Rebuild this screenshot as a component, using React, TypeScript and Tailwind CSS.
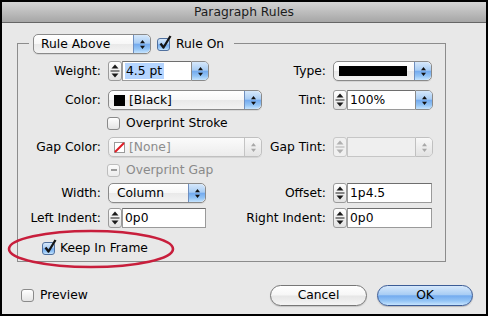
import React from "react";

const BLUE =
  "bg-[linear-gradient(to_bottom,#d6e8fb_0%,#a9cdf4_45%,#74abef_52%,#93c4f5_78%,#c6e4fe_100%)]";
const WHITEGRAD = "bg-[linear-gradient(to_bottom,#ffffff_0%,#f7f7f7_50%,#e9e9e9_52%,#f3f3f3_100%)]";

function UpDown({ color = "#111" }: { color?: string }) {
  return (
    <svg width="7" height="11" viewBox="0 0 7 11">
      <path d="M3.5 1 L6 4.2 L1 4.2 Z M1 6.8 L6 6.8 L3.5 10 Z" fill={color} />
    </svg>
  );
}

function Arrow({ disabled = false }: { disabled?: boolean }) {
  return (
    <div
      className={`w-[17px] h-full flex items-center justify-center rounded-r-[5px] border-l ${
        disabled
          ? "border-[#c4c4c4] bg-[linear-gradient(to_bottom,#f8f8f8,#e4e4e4)]"
          : `border-[#6f8fbf] ${BLUE}`
      }`}
    >
      <UpDown color={disabled ? "#a8a8a8" : "#111"} />
    </div>
  );
}

function Popup({
  w,
  children,
  disabled = false,
}: {
  w: string;
  children: React.ReactNode;
  disabled?: boolean;
}) {
  return (
    <div
      className={`${w} h-[20px] flex rounded-[5px] border ${
        disabled ? "border-[#c0c0c0] bg-[linear-gradient(to_bottom,#fbfbfb,#ececec)]" : `border-[#8a8a8a] ${WHITEGRAD}`
      } shadow-[0_1px_0_rgba(0,0,0,0.08)]`}
    >
      <div className={`flex-1 flex items-center min-w-0 ${disabled ? "text-[#8c8c8c]" : "text-black"}`}>
        {children}
      </div>
      <Arrow disabled={disabled} />
    </div>
  );
}

function Stepper({ disabled = false }: { disabled?: boolean }) {
  const c = disabled ? "#b0b0b0" : "#1a1a1a";
  return (
    <div
      className={`w-[14px] h-[20px] flex items-center justify-center rounded-[3px] border ${
        disabled ? "border-[#c8c8c8] bg-[#f0f0f0]" : "border-[#9a9a9a] bg-[linear-gradient(to_bottom,#ffffff,#e2e2e2)]"
      }`}
    >
      <svg width="12" height="18" viewBox="0 0 12 18">
        <path d="M6 2.5 L9.5 6.5 L2.5 6.5 Z M2.5 11.5 L9.5 11.5 L6 15.5 Z" fill={c} />
        <path d="M1.5 9 L10.5 9" stroke={c} strokeWidth="1" />
      </svg>
    </div>
  );
}

function Input({ w, children }: { w: string; children?: React.ReactNode }) {
  return (
    <div className={`${w} h-[20px] flex items-center pl-[2px] border bg-white border-[#9a9a9a] border-t-[#6e6e6e]`}>
      {children}
    </div>
  );
}

function Check({ checked = false, mixed = false, disabled = false }: { checked?: boolean; mixed?: boolean; disabled?: boolean }) {
  return (
    <div className="relative w-[13px] h-[13px] shrink-0">
      <div
        className={`w-[13px] h-[13px] rounded-[3px] border ${
          checked
            ? `border-[#50709e] ${BLUE}`
            : disabled
            ? "border-[#bdbdbd] bg-[linear-gradient(to_bottom,#fbfbfb,#ececec)]"
            : "border-[#8a8a8a] bg-[linear-gradient(to_bottom,#ffffff,#e4e4e4)]"
        } flex items-center justify-center`}
      >
        {mixed && <div className="w-[6px] h-[2px] bg-[#9a9a9a]" />}
      </div>
      {checked && (
        <svg className="absolute left-[1px] top-[-3px]" width="14" height="15" viewBox="0 0 14 15">
          <path d="M2.5 8.5 L5.5 12.5 L12.5 1" fill="none" stroke="#141414" strokeWidth="2.3" strokeLinejoin="round" />
        </svg>
      )}
    </div>
  );
}

function Row({
  label,
  left,
  rlabel,
  right,
  mt,
}: {
  label?: string;
  left?: React.ReactNode;
  rlabel?: string;
  right?: React.ReactNode;
  mt: string;
}) {
  return (
    <div className={`flex items-center h-[20px] ${mt}`}>
      <div className="w-[83px] shrink-0 flex justify-end whitespace-nowrap">{label}</div>
      <div className="w-[154px] shrink-0 ml-[7px] flex">{left}</div>
      <div className="w-[64px] shrink-0 flex justify-end whitespace-nowrap">{rlabel}</div>
      <div className="w-[99px] shrink-0 ml-[7px] flex">{right}</div>
    </div>
  );
}

export default function App() {
  return (
    <div className="relative w-[488px] h-[316px] bg-black p-[2px] font-['DejaVu_Sans',sans-serif] text-[12.3px] leading-none text-black">
      <div className="w-full h-full flex flex-col bg-[#e8e8e8]">
        {/* title bar */}
        <div className="h-[21px] shrink-0 flex items-center justify-center border-b border-[#666666] bg-[linear-gradient(to_bottom,#d4d4d4,#a6a6a6)] text-[#1c1c1c]">
          Paragraph Rules
        </div>
        {/* body */}
        <div className="flex-1 flex flex-col px-[15px] pt-[20px]">
          <div className="w-[429px] h-[219px] shrink-0 border border-[#8c8c8c] flex flex-col">
            {/* header legend */}
            <div className="-mt-[10px] ml-[11px] w-fit h-[20px] flex items-center px-[4px] pr-[10px] bg-[#e8e8e8]">
              <Popup w="w-[118px]">
                <span className="pl-[7px]">Rule Above</span>
              </Popup>
              <div className="ml-[6px]">
                <Check checked />
              </div>
              <span className="ml-[6px]">Rule On</span>
            </div>

            <Row
              mt="mt-[7px]"
              label="Weight:"
              left={
                <div className="flex">
                  <Stepper />
                  <div className="w-[69px] h-[20px] flex items-center pl-[2px] bg-white border border-[#9a9a9a] border-t-[#6e6e6e] border-r-0">
                    <span className="bg-[#b5d5ff] h-[16px] flex items-center pl-[1px] pr-[2px]">4.5 pt</span>
                  </div>
                  <div className="h-[20px] flex border border-[#8a8a8a] rounded-r-[5px]">
                    <div className={`w-[16px] h-full flex items-center justify-center rounded-r-[4px] ${BLUE}`}>
                      <UpDown />
                    </div>
                  </div>
                </div>
              }
              rlabel="Type:"
              right={
                <Popup w="w-[99px]">
                  <div className="ml-[5px] w-[68px] h-[10px] bg-black" />
                </Popup>
              }
            />

            <Row
              mt="mt-[9px]"
              label="Color:"
              left={
                <Popup w="w-[154px]">
                  <div className="ml-[5px] w-[11px] h-[11px] bg-black" />
                  <span className="ml-[4px]">[Black]</span>
                </Popup>
              }
              rlabel="Tint:"
              right={
                <div className="flex">
                  <Stepper />
                  <div className="w-[68px] h-[20px] flex items-center pl-[2px] bg-white border border-[#9a9a9a] border-t-[#6e6e6e] border-r-0">
                    100%
                  </div>
                  <div className="h-[20px] flex border border-[#8a8a8a] rounded-r-[5px]">
                    <div className={`w-[16px] h-full flex items-center justify-center rounded-r-[4px] ${BLUE}`}>
                      <UpDown />
                    </div>
                  </div>
                </div>
              }
            />

            <div className="flex items-center h-[16px] mt-[5px] pl-[89px]">
              <Check />
              <span className="ml-[6px]">Overprint Stroke</span>
            </div>

            <Row
              mt="mt-[6px]"
              label="Gap Color:"
              left={
                <Popup w="w-[154px]" disabled>
                  <svg className="ml-[5px]" width="11" height="11" viewBox="0 0 11 11">
                    <rect x="0.5" y="0.5" width="10" height="10" fill="#fff" stroke="#9a9a9a" />
                    <path d="M1 10 L10 1" stroke="#e01b24" strokeWidth="2" />
                  </svg>
                  <span className="ml-[4px]">[None]</span>
                </Popup>
              }
              rlabel="Gap Tint:"
              right={
                <div className="flex">
                  <Stepper disabled />
                  <div className="w-[68px] h-[20px] bg-[#efefef] border border-[#c6c6c6] border-r-0" />
                  <div className="h-[20px] flex border border-[#c0c0c0] rounded-r-[5px]">
                    <div className="w-[16px] h-full flex items-center justify-center rounded-r-[4px] bg-[linear-gradient(to_bottom,#f8f8f8,#e2e2e2)]">
                      <UpDown color="#a8a8a8" />
                    </div>
                  </div>
                </div>
              }
            />

            <div className="flex items-center h-[16px] mt-[5px] pl-[89px]">
              <Check mixed disabled />
              <span className="ml-[6px] text-[#8a8a8a]">Overprint Gap</span>
            </div>

            <Row
              mt="mt-[5px]"
              label="Width:"
              left={
                <Popup w="w-[98px]">
                  <span className="pl-[8px]">Column</span>
                </Popup>
              }
              rlabel="Offset:"
              right={
                <div className="flex">
                  <Stepper />
                  <Input w="w-[85px]">1p4.5</Input>
                </div>
              }
            />

            <Row
              mt="mt-[5px]"
              label="Left Indent:"
              left={
                <div className="flex">
                  <Stepper />
                  <Input w="w-[84px]">0p0</Input>
                </div>
              }
              rlabel="Right Indent:"
              right={
                <div className="flex">
                  <Stepper />
                  <Input w="w-[85px]">0p0</Input>
                </div>
              }
            />

            <div className="flex items-center h-[17px] mt-[12px] pl-[24px]">
              <Check checked />
              <span className="ml-[5px]">Keep In Frame</span>
            </div>
          </div>

          {/* bottom row */}
          <div className="flex items-center h-[21px] mt-[23px] -mr-[2px]">
            <div className="pl-[4px] flex items-center">
              <Check />
              <span className="ml-[6px]">Preview</span>
            </div>
            <div className="ml-auto flex gap-[10px]">
              <div className="w-[97px] h-[21px] rounded-full border border-[#777777] bg-[linear-gradient(to_bottom,#ffffff_0%,#f6f6f6_48%,#e6e6e6_52%,#f4f4f4_100%)] flex items-center justify-center shadow-[0_1px_1px_rgba(0,0,0,0.15)]">
                Cancel
              </div>
              <div className={`w-[96px] h-[21px] rounded-full border border-[#3c5c96] ${BLUE} flex items-center justify-center shadow-[0_1px_1px_rgba(0,0,0,0.2)]`}>
                OK
              </div>
            </div>
          </div>
        </div>
      </div>

      {/* annotation ellipse */}
      <svg className="absolute left-[7px] top-[229px] pointer-events-none" width="168" height="40" viewBox="0 0 168 40">
        <ellipse cx="84" cy="20" rx="82" ry="18" fill="none" stroke="#c81e3c" strokeWidth="2.6" />
      </svg>
    </div>
  );
}
